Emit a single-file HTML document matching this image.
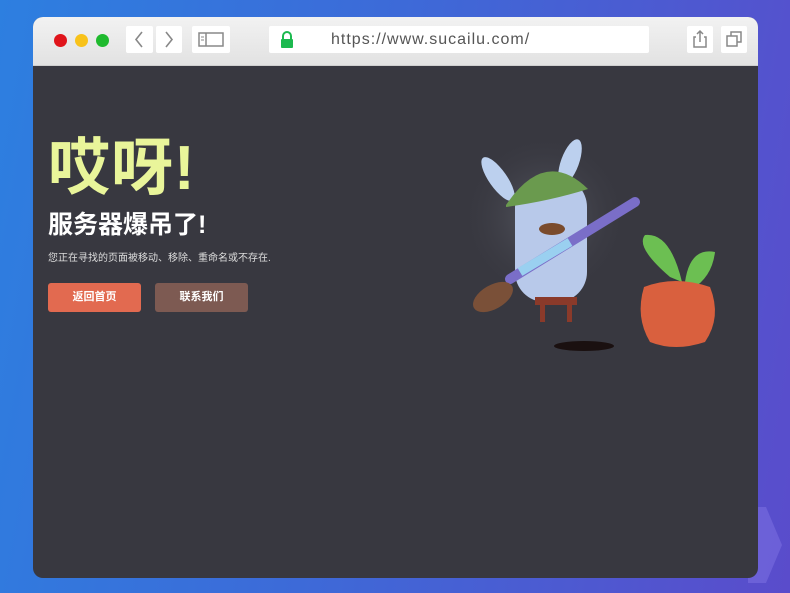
<!DOCTYPE html>
<html><head><meta charset="utf-8"><style>
*{margin:0;padding:0;box-sizing:border-box}
body{width:790px;height:593px;overflow:hidden;background:linear-gradient(100deg,#2d7fe0 0%,#3d6ad8 45%,#5a4ccb 100%);font-family:"Liberation Sans","Noto Sans CJK SC",sans-serif;position:relative}
.win{position:absolute;left:33px;top:17px;width:725px;height:561px;border-radius:10px;overflow:hidden;background:#383840}
.bar{height:49px;background:linear-gradient(#f2f2f2,#e2e2e2);border-bottom:1px solid #cfcfcf;position:relative}
.dot{position:absolute;top:17px;width:13px;height:13px;border-radius:50%}
.btn{position:absolute;top:9px;height:27px;background:#fff;border-radius:2px}
.url{position:absolute;left:236px;top:9px;width:380px;height:27px;background:#fff;border-radius:2px;font-size:16px;color:#555;letter-spacing:1px;line-height:27px;padding-left:62px}
h1{position:absolute;left:15px;top:110px;font-size:62px;line-height:84px;color:#e9f59a;font-weight:bold;letter-spacing:1px}
h2{position:absolute;left:15px;top:190px;font-size:25px;line-height:36px;color:#fff;font-weight:bold}
p{position:absolute;left:15px;top:232px;font-size:10px;color:#ddd}
.b{position:absolute;top:266px;width:93px;height:29px;border-radius:3px;color:#fff;font-size:11px;font-weight:bold;text-align:center;line-height:29px}
</style></head><body>
<svg style="position:absolute;left:748px;top:505px" width="36" height="80"><polygon points="0,2 18,2 34,40 18,78 0,78" fill="#7a6ee0" opacity=".6"/></svg>
<div class="win">
<div class="bar">
<div class="dot" style="left:21px;background:#e0141b"></div>
<div class="dot" style="left:42px;background:#f8c21a"></div>
<div class="dot" style="left:63px;background:#1fba2e"></div>
<div class="btn" style="left:93px;width:27px"><svg width="27" height="27"><path d="M16 6 L10 13.5 L16 21" stroke="#888" stroke-width="1.6" fill="none"/></svg></div>
<div class="btn" style="left:123px;width:26px"><svg width="26" height="27"><path d="M10 6 L16 13.5 L10 21" stroke="#888" stroke-width="1.6" fill="none"/></svg></div>
<div class="btn" style="left:159px;width:38px"><svg width="38" height="27"><rect x="7" y="7" width="24" height="13" fill="none" stroke="#888" stroke-width="1.5"/><line x1="14" y1="7" x2="14" y2="20" stroke="#888" stroke-width="1.5"/><line x1="9" y1="11" x2="12" y2="11" stroke="#888"/><line x1="9" y1="14" x2="12" y2="14" stroke="#888"/></svg></div>
<div class="url"><svg style="position:absolute;left:10px;top:5px" width="16" height="18"><path d="M4 8 V5 a4 4 0 0 1 8 0 V8" stroke="#1cb94f" stroke-width="2" fill="none"/><rect x="2" y="8" width="12" height="9" rx="1" fill="#1cb94f"/></svg>https://www.sucailu.com/</div>
<div class="btn" style="left:654px;width:26px"><svg width="26" height="27"><path d="M9 11 H7 V21 H19 V11 H17 M13 16 V5 M10 8 L13 5 L16 8" stroke="#888" stroke-width="1.5" fill="none"/></svg></div>
<div class="btn" style="left:688px;width:26px"><svg width="26" height="27"><rect x="6" y="10" width="10" height="10" fill="none" stroke="#888" stroke-width="1.5"/><path d="M10 10 V6 H20 V16 H16" stroke="#888" stroke-width="1.5" fill="none"/></svg></div>
</div>
<h1>哎呀!</h1>
<h2>服务器爆吊了!</h2>
<p>您正在寻找的页面被移动、移除、重命名或不存在.</p>
<div class="b" style="left:15px;background:#e26a50">返回首页</div>
<div class="b" style="left:122px;background:#7d5a52">联系我们</div>
<svg style="position:absolute;left:427px;top:100px" width="290" height="250">
<defs><radialGradient id="g"><stop offset="0" stop-color="#5a5c66"/><stop offset="1" stop-color="#383840" stop-opacity="0"/></radialGradient></defs>
<circle cx="85" cy="100" r="85" fill="url(#g)"/>
<ellipse cx="38" cy="62" rx="9" ry="26" fill="#bcd0ee" transform="rotate(-35 38 62)"/>
<ellipse cx="110" cy="45" rx="9" ry="24" fill="#bcd0ee" transform="rotate(20 110 45)"/>
<rect x="55" y="60" width="72" height="125" rx="30" fill="#b8c9ea"/>
<path d="M46 88 Q85 30 128 72 Q90 84 46 90Z" fill="#6a9a4e"/>
<ellipse cx="92" cy="112" rx="13" ry="6" fill="#7a4b2c"/>
<line x1="50" y1="162" x2="175" y2="85" stroke="#7a6ec8" stroke-width="10" stroke-linecap="round"/>
<line x1="60" y1="155" x2="110" y2="125" stroke="#9ad0f0" stroke-width="9"/>
<ellipse cx="33" cy="180" rx="22" ry="12" fill="#7a5038" transform="rotate(-30 33 180)"/>
<rect x="75" y="180" width="42" height="8" fill="#8a3a2a"/>
<rect x="80" y="188" width="5" height="17" fill="#8a3a2a"/><rect x="107" y="188" width="5" height="17" fill="#8a3a2a"/>
<ellipse cx="124" cy="229" rx="30" ry="5" fill="#1a1010"/>
<path d="M210 160 Q175 130 185 118 Q210 115 222 165Z" fill="#6cbf52"/>
<path d="M225 165 Q230 130 255 135 Q252 160 232 172Z" fill="#6cbf52"/>
<path d="M184 170 Q215 158 250 170 Q262 200 245 225 Q215 235 190 225 Q175 200 184 170Z" fill="#d9603e"/>
</svg>
</div>
</body></html>
